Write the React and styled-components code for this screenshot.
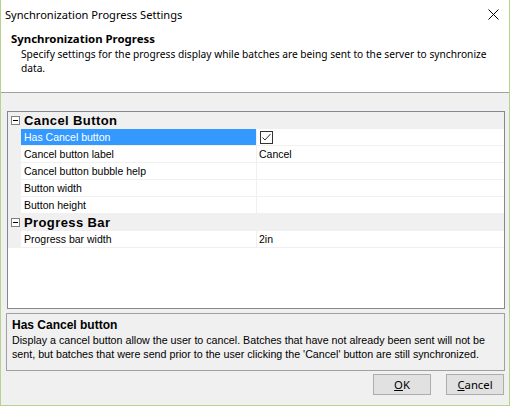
import React from "react";
import styled, { createGlobalStyle } from "styled-components";

const Global = createGlobalStyle`
  html, body { margin: 0; padding: 0; background: #ffffff; }
  * { box-sizing: border-box; }
`;

const UI = `"Noto Sans", "Open Sans", sans-serif`;
const MS = `"Liberation Sans", Arial, sans-serif`;

const Window = styled.div`
  width: 510px;
  height: 406px;
  border: 1px solid #b9d38f;
  border-top: none;
  display: flex;
  flex-direction: column;
  background: #f0f0f0;
  overflow: hidden;
`;

const TitleBar = styled.div`
  height: 29px;
  background: #ffffff;
  display: flex;
  align-items: center;
  justify-content: space-between;
  padding: 0 10px 0 4px;
  font-family: ${UI};
  font-size: 11.1px;
  color: #000;
`;

const CloseIcon = styled.svg`
  width: 11px;
  height: 11px;
  display: block;
`;

const Header = styled.div`
  height: 64px;
  background: #ffffff;
  border-bottom: 1px solid #a0a0a0;
  padding: 2px 0 0 10px;
  font-family: ${UI};
  color: #000;
`;

const HeaderTitle = styled.div`
  font-weight: bold;
  font-size: 11.4px;
  line-height: 16px;
`;

const HeaderText = styled.div`
  font-size: 10.2px;
  line-height: 14px;
  padding-left: 10px;
  padding-right: 2px;
`;

const Body = styled.div`
  flex: 1;
  display: flex;
  flex-direction: column;
  padding: 18px 4px 10px 5px;
`;

const Grid = styled.div`
  height: 198px;
  margin-left: 1px;
  border: 1px solid #828790;
  background: #ffffff;
  display: flex;
  flex-direction: column;
  font-family: ${MS};
  font-size: 10.5px;
  color: #000;
`;

const CategoryRow = styled.div`
  height: 17px;
  display: flex;
  align-items: center;
  background: #f0f0f0;
`;

const Toggle = styled.div`
  width: 13px;
  display: flex;
  justify-content: center;
  padding-left: 2px;
`;

const MinusBox = styled.div`
  width: 9px;
  height: 9px;
  border: 1px solid #808080;
  background: #ffffff;
  position: relative;
  &::after {
    content: "";
    position: absolute;
    left: 1px;
    right: 1px;
    top: 3px;
    height: 1px;
    background: #000;
  }
`;

const CategoryLabel = styled.div`
  font-weight: bold;
  font-size: 13px;
  letter-spacing: 0.4px;
  padding-left: 3px;
`;

const Row = styled.div`
  height: 17px;
  display: flex;
  border-bottom: 1px solid #f0f0f0;
`;

const Gutter = styled.div`
  width: 13px;
  background: #f0f0f0;
  flex: none;
`;

const LabelCell = styled.div`
  width: 236px;
  flex: none;
  display: flex;
  align-items: center;
  padding-left: 3px;
  background: ${(p) => (p.$selected ? "#3399ff" : "#ffffff")};
  color: ${(p) => (p.$selected ? "#ffffff" : "#000000")};
  border-right: 1px solid #f0f0f0;
`;

const ValueCell = styled.div`
  flex: 1;
  display: flex;
  align-items: center;
  padding-left: 2px;
`;

const CheckBox = styled.svg`
  width: 13px;
  height: 13px;
  display: block;
  margin-left: 1px;
`;

const Help = styled.div`
  height: 58px;
  margin-top: 4px;
  border: 1px solid #a0a0a0;
  padding: 3px 5px 0 5px;
  font-family: ${MS};
  font-size: 10.7px;
  color: #000;
`;

const HelpTitle = styled.div`
  font-weight: bold;
  font-size: 12px;
  line-height: 16px;
`;

const HelpText = styled.div`
  line-height: 14px;
`;

const Buttons = styled.div`
  display: flex;
  justify-content: flex-end;
  gap: 15px;
  margin-top: 3px;
  padding-right: 1px;
`;

const Button = styled.button`
  width: 58px;
  height: 21px;
  border: 1px solid #adadad;
  background: #e1e1e1;
  font-family: ${UI};
  font-size: 11.3px;
  color: #000;
  padding: 0;
  display: flex;
  align-items: center;
  justify-content: center;
  u { text-decoration: underline; }
`;

const rows = [
  { type: "cat", label: "Cancel Button" },
  { label: "Has Cancel button", selected: true, check: true },
  { label: "Cancel button label", value: "Cancel" },
  { label: "Cancel button bubble help" },
  { label: "Button width" },
  { label: "Button height" },
  { type: "cat", label: "Progress Bar" },
  { label: "Progress bar width", value: "2in" },
];

export default function App() {
  return (
    <>
      <Global />
      <Window>
        <TitleBar>
          <span>Synchronization Progress Settings</span>
          <CloseIcon viewBox="0 0 11 11">
            <path d="M0.5 0.5 L10.5 10.5 M10.5 0.5 L0.5 10.5" stroke="#000" strokeWidth="1" fill="none" />
          </CloseIcon>
        </TitleBar>
        <Header>
          <HeaderTitle>Synchronization Progress</HeaderTitle>
          <HeaderText>
            Specify settings for the progress display while batches are being sent to the server to synchronize data.
          </HeaderText>
        </Header>
        <Body>
          <Grid>
            {rows.map((r, i) =>
              r.type === "cat" ? (
                <CategoryRow key={i}>
                  <Toggle>
                    <MinusBox />
                  </Toggle>
                  <CategoryLabel>{r.label}</CategoryLabel>
                </CategoryRow>
              ) : (
                <Row key={i}>
                  <Gutter />
                  <LabelCell $selected={r.selected}>{r.label}</LabelCell>
                  <ValueCell>
                    {r.check ? (
                      <CheckBox viewBox="0 0 13 13">
                        <rect x="0.5" y="0.5" width="12" height="12" fill="#fff" stroke="#333" />
                        <path d="M2.5 6.5 L5 9 L10.5 3" stroke="#333" strokeWidth="1" fill="none" />
                      </CheckBox>
                    ) : (
                      r.value
                    )}
                  </ValueCell>
                </Row>
              )
            )}
          </Grid>
          <Help>
            <HelpTitle>Has Cancel button</HelpTitle>
            <HelpText>
              Display a cancel button allow the user to cancel. Batches that have not already been sent will not be
              sent, but batches that were send prior to the user clicking the 'Cancel' button are still synchronized.
            </HelpText>
          </Help>
          <Buttons>
            <Button>
              <span><u>O</u>K</span>
            </Button>
            <Button>
              <span><u>C</u>ancel</span>
            </Button>
          </Buttons>
        </Body>
      </Window>
    </>
  );
}
